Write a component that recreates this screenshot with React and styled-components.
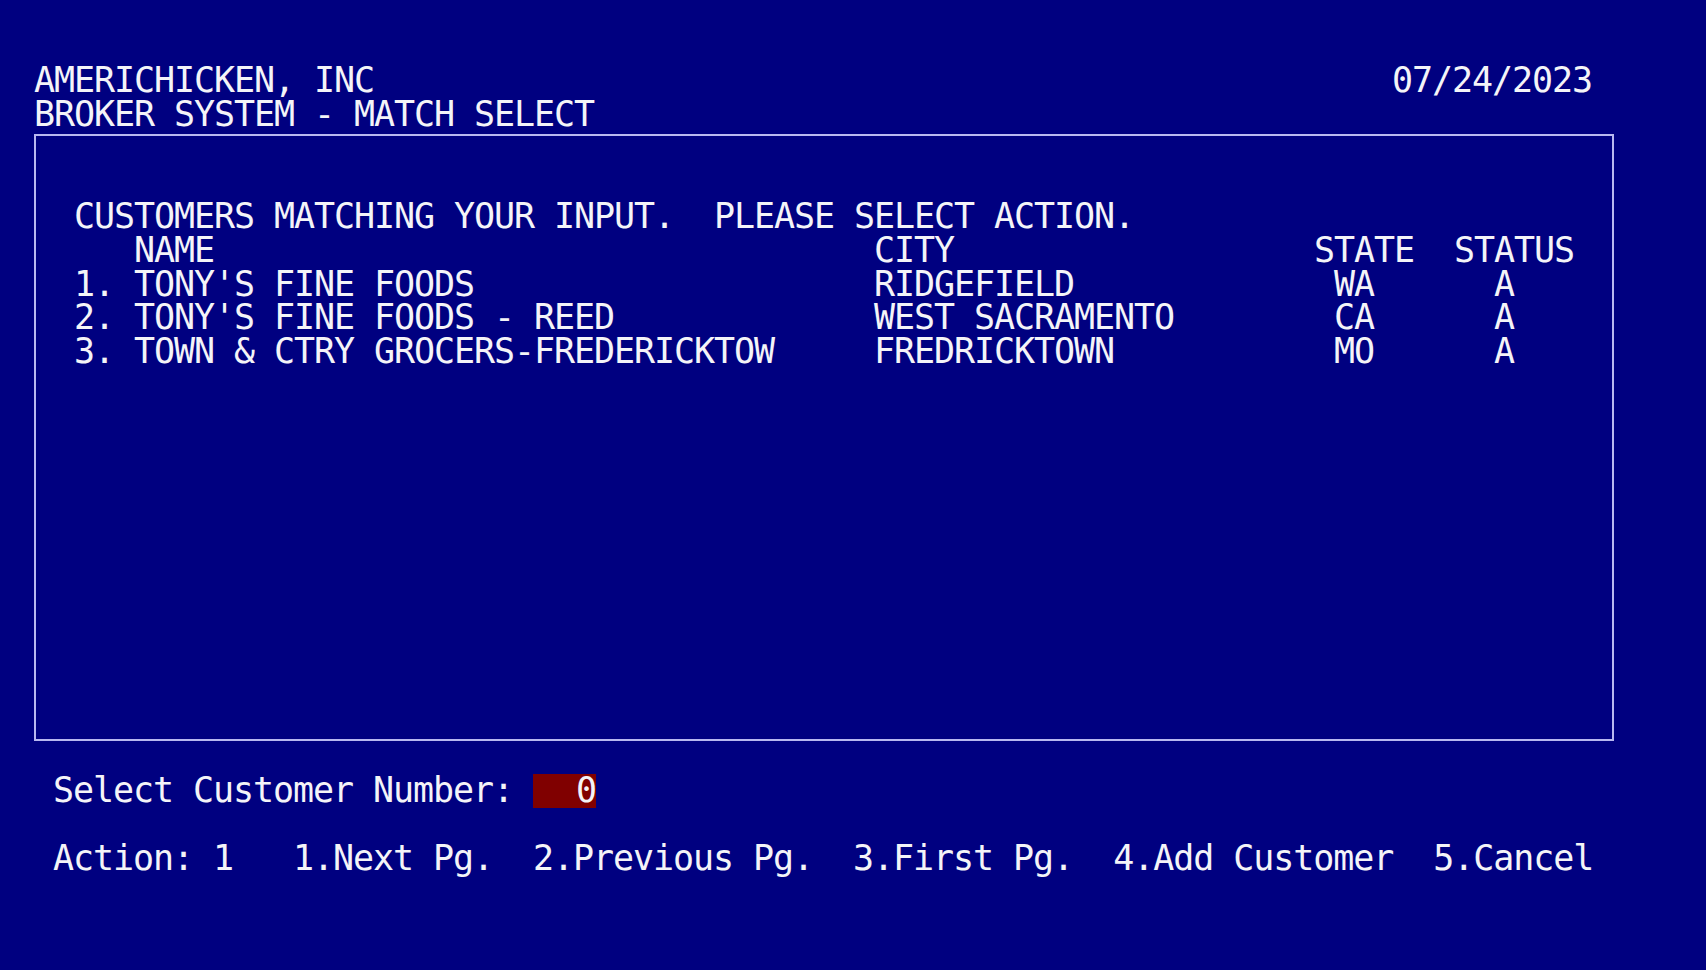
import React from 'react';
import styled, { createGlobalStyle } from 'styled-components';

const COL = 20;
const ROW = 33.7;

const GlobalStyle = createGlobalStyle`
  html, body {
    margin: 0;
    padding: 0;
    background: #000080;
  }
`

const Screen = styled.div`
  width: 1706px;
  height: 970px;
  box-sizing: border-box;
  padding: 64px 0 0 34px;
  background: #000080;
  color: #f4f4f8;
  font-family: "DejaVu Sans Mono", "Liberation Mono", monospace;
  font-size: 35px;
  letter-spacing: -1.07px;
  line-height: ${ROW}px;
  overflow: hidden;
`

const Line = styled.div`
  display: flex;
  white-space: pre;
  height: ${ROW}px;
`

const HeaderLine = styled(Line)`
  width: 1578px;
  padding-right: 20px;
  box-sizing: border-box;
  justify-content: space-between;
`

const DateText = styled.span`
  margin-top: -${ROW}px;
`

const Frame = styled.div`
  margin-top: 3px;
  width: 1580px;
  height: 607px;
  box-sizing: border-box;
  border: 2px solid #b8b8f0;
  padding: 64px 0 0 38px;
`

const Cell = styled.span`
  display: inline-block;
  width: ${p => p.$cols * COL}px;
  white-space: pre;
`

const Prompt = styled(Line)`
  margin-top: 33px;
  padding-left: 19px;
`

const ActionLine = styled(Line)`
  margin-top: ${ROW}px;
  padding-left: 19px;
`

const Field = styled.span`
  display: inline-block;
  width: 63px;
  height: ${ROW}px;
  background: #800000;
  text-align: right;
  white-space: pre;
`

const rows = [
  { n: '1.', name: "TONY'S FINE FOODS", city: 'RIDGEFIELD', state: 'WA', status: 'A' },
  { n: '2.', name: "TONY'S FINE FOODS - REED", city: 'WEST SACRAMENTO', state: 'CA', status: 'A' },
  { n: '3.', name: 'TOWN & CTRY GROCERS-FREDERICKTOW', city: 'FREDRICKTOWN', state: 'MO', status: 'A' },
];

const actions = ['1.Next Pg.', '2.Previous Pg.', '3.First Pg.', '4.Add Customer', '5.Cancel'];

export default function App() {
  return (
    <Screen>
      <GlobalStyle />
      <Line>AMERICHICKEN, INC</Line>
      <HeaderLine>
        <span>BROKER SYSTEM - MATCH SELECT</span>
        <DateText>07/24/2023</DateText>
      </HeaderLine>
      <Frame>
        <Line>CUSTOMERS MATCHING YOUR INPUT.  PLEASE SELECT ACTION.</Line>
        <Line>
          <Cell $cols={3}></Cell>
          <Cell $cols={37}>NAME</Cell>
          <Cell $cols={22}>CITY</Cell>
          <Cell $cols={7}>STATE</Cell>
          <Cell $cols={6}>STATUS</Cell>
        </Line>
        {rows.map(r => (
          <Line key={r.n}>
            <Cell $cols={3}>{r.n}</Cell>
            <Cell $cols={37}>{r.name}</Cell>
            <Cell $cols={22}>{r.city}</Cell>
            <Cell $cols={7}>{' ' + r.state}</Cell>
            <Cell $cols={6}>{'  ' + r.status}</Cell>
          </Line>
        ))}
      </Frame>
      <Prompt>
        <span>Select Customer Number: </span>
        <Field>0</Field>
      </Prompt>
      <ActionLine>
        <span>{'Action: 1   '}</span>
        {actions.map((a, i) => (
          <span key={a}>{a + (i < actions.length - 1 ? '  ' : '')}</span>
        ))}
      </ActionLine>
    </Screen>
  );
}
